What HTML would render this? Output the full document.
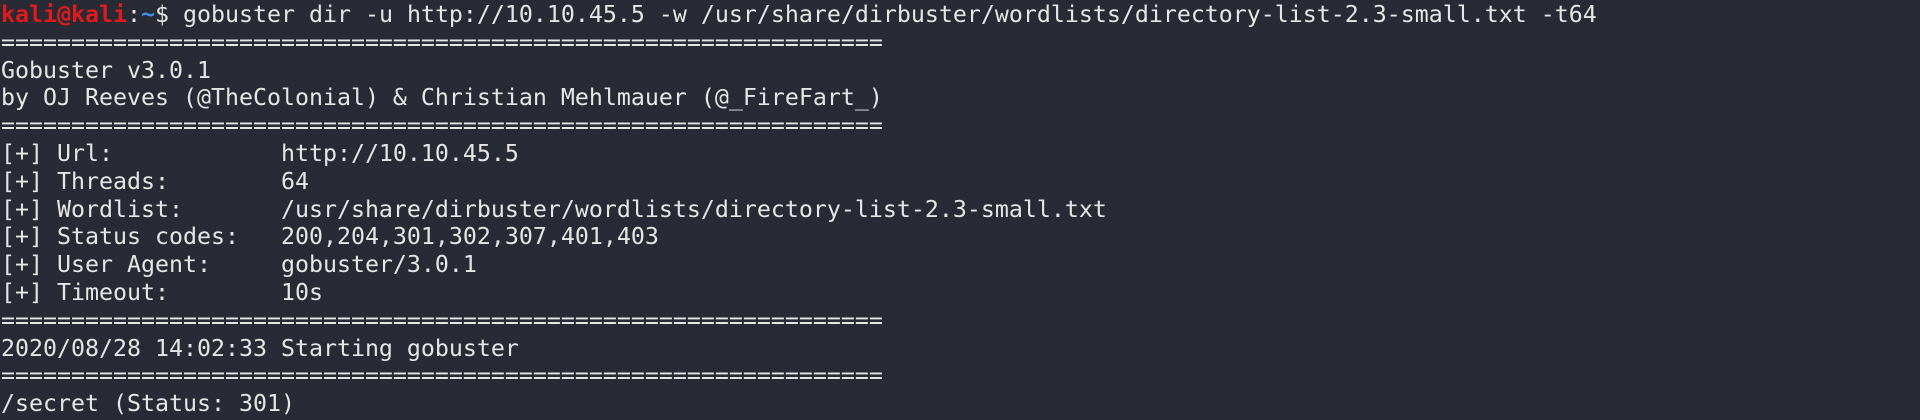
<!DOCTYPE html>
<html><head><style>
html,body{margin:0;padding:0;background:#282a36;width:1920px;height:420px;overflow:hidden}
pre{margin:0;padding:1px 0 0 1px;font-family:"DejaVu Sans Mono","Liberation Mono",monospace;font-size:23.25px;line-height:27.8px;color:#e6e6e6;white-space:pre}
.r{color:#e01b1b;font-weight:bold}.b{color:#3b8eea;font-weight:bold}
</style></head><body><pre><span class="r">kali@kali</span>:<span class="b">~</span>$ gobuster dir -u http://10.10.45.5 -w /usr/share/dirbuster/wordlists/directory-list-2.3-small.txt -t64
===============================================================
Gobuster v3.0.1
by OJ Reeves (@TheColonial) &amp; Christian Mehlmauer (@_FireFart_)
===============================================================
[+] Url:            http://10.10.45.5
[+] Threads:        64
[+] Wordlist:       /usr/share/dirbuster/wordlists/directory-list-2.3-small.txt
[+] Status codes:   200,204,301,302,307,401,403
[+] User Agent:     gobuster/3.0.1
[+] Timeout:        10s
===============================================================
2020/08/28 14:02:33 Starting gobuster
===============================================================
/secret (Status: 301)</pre></body></html>
